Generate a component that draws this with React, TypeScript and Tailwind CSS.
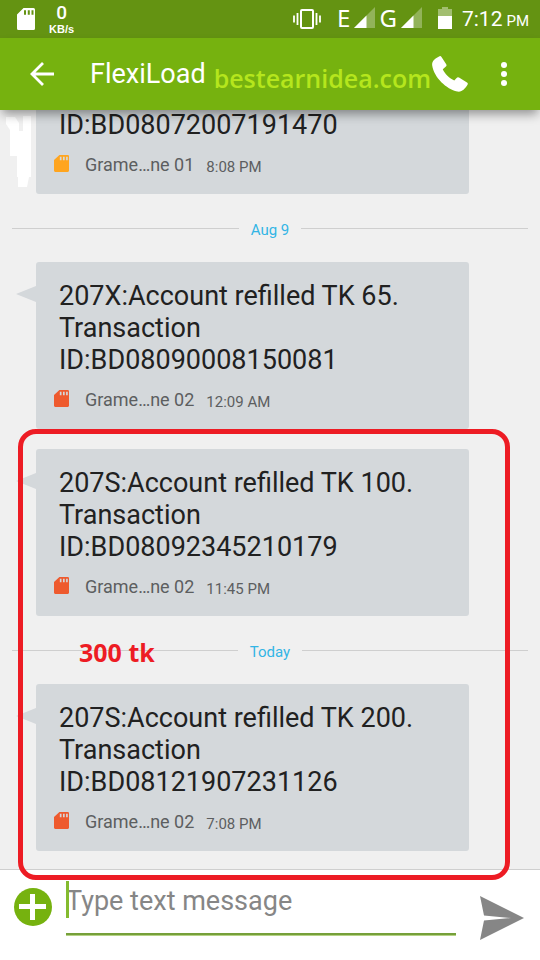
import { useState } from 'react'

interface Message {
  id: string
  lines: string[]
  sim: 'one' | 'two'
  carrier: string
  time: string
}

const earlier: Message = {
  id: 'm1',
  lines: ['ID:BD08072007191470'],
  sim: 'one',
  carrier: 'Grame…ne 01',
  time: '8:08 PM',
}

const midnight: Message = {
  id: 'm2',
  lines: ['207X:Account refilled TK 65.', 'Transaction', 'ID:BD08090008150081'],
  sim: 'two',
  carrier: 'Grame…ne 02',
  time: '12:09 AM',
}

const first: Message = {
  id: 'm3',
  lines: ['207S:Account refilled TK 100.', 'Transaction', 'ID:BD08092345210179'],
  sim: 'two',
  carrier: 'Grame…ne 02',
  time: '11:45 PM',
}

const second: Message = {
  id: 'm4',
  lines: ['207S:Account refilled TK 200.', 'Transaction', 'ID:BD08121907231126'],
  sim: 'two',
  carrier: 'Grame…ne 02',
  time: '7:08 PM',
}

function SdCard({ className }: { className: string }) {
  return (
    <svg className={className} viewBox="0 0 18 22" fill="currentColor" preserveAspectRatio="none">
      <path
        fillRule="evenodd"
        d="M6.5 0H16.5Q18 0 18 1.500V20.500Q18 22 16.500 22H1.500Q0 22 0 20.500V6.500ZM7 2.200V6.800H9V2.200ZM10.800 2.200V6.800H12.800V2.200ZM14.500 2.200V6.800H16.500V2.200Z"
      />
    </svg>
  )
}

function Signal() {
  return (
    <svg className="mb-[3px] ml-1 h-[21px] w-[21px]" viewBox="0 0 21 21" fill="white">
      <path d="M21 0V21H0Z" opacity="0.3" />
      <path d="M12.500 8.500V21H0Z" />
    </svg>
  )
}

function StatusBar() {
  return (
    <div className="flex h-[38px] shrink-0 items-center bg-[#649312] pl-[17px] pr-[11px] text-white">
      <SdCard className="h-[22px] w-[18px]" />
      <div className="ml-[14px] flex flex-col items-center">
        <span className="text-[19px] font-medium leading-5">0</span>
        <span className="font-['Liberation_Sans'] text-[11px] font-bold leading-3">KB/s</span>
      </div>

      <div className="ml-auto flex items-center">
        <svg className="h-[22px] w-7" viewBox="0 0 28 22" fill="none" stroke="white" strokeWidth="2">
          <rect x="8" y="2" width="12" height="18" rx="1" />
          <path d="M4.500 5V17M1 7.500V14.500M23.500 5V17M27 7.500V14.500" strokeWidth="1.800" />
        </svg>
        <span className="ml-4 mb-[2px] font-['Noto_Sans'] text-2xl leading-6">E</span>
        <Signal />
        <span className="ml-1 mb-[2px] font-['Noto_Sans'] text-2xl leading-6">G</span>
        <Signal />
        <svg className="mb-[2px] ml-4 h-[22px] w-[14px]" viewBox="0 0 14 22" fill="white">
          <path d="M4 0H10V2H14V9H0V2H4Z" opacity="0.4" />
          <path d="M0 9H14V22H0Z" />
        </svg>
        <span className="ml-[10px] text-[21px] leading-6">7:12</span>
        <span className="ml-1 pt-1 text-[15px] leading-5">PM</span>
      </div>
    </div>
  )
}

function AppBar() {
  return (
    <header className="flex h-[72px] shrink-0 items-center bg-[#76b20f] pl-[30px] pr-[29px] text-white shadow-[0_6px_10px_-2px_rgba(0,0,0,0.4)]">
      <button type="button" aria-label="Back">
        <svg className="h-6 w-6" viewBox="0 0 24 24" fill="none" stroke="white" strokeWidth="2.800">
          <path d="M24 12H2.500M13 1L2 12L13 23" />
        </svg>
      </button>
      <h1 className="ml-9 text-[27px] leading-8">FlexiLoad</h1>
      <span className="ml-2 pt-2 font-['Open_Sans'] text-[25px] font-semibold leading-8 text-[#b5e61d]">
        bestearnidea.com
      </span>
      <button type="button" aria-label="Call" className="ml-auto shrink-0">
        <svg className="h-9 w-9" viewBox="0 0 36 36" fill="white">
          <path d="M7.500 0.300Q8.600-0.300 9.500 1L14.200 8.200Q15 9.500 13.900 10.500L10.800 13.200C12.600 17.700 17.500 22.300 22.300 24.500L24.600 22Q25.700 20.800 27 21.600L35 26.600Q36.300 27.400 35.500 28.700C33.300 32.300 30 36.500 25.200 35.500C14.500 33.200 2 21.500 0.200 9.500C-0.500 5 3.800 2.200 7.500 0.300Z" />
        </svg>
      </button>
      <button type="button" aria-label="More options" className="ml-[29px] shrink-0">
        <svg className="h-6 w-[14px]" viewBox="0 0 14 24" fill="white">
          <circle cx="7" cy="3" r="3" />
          <circle cx="7" cy="12" r="3" />
          <circle cx="7" cy="21" r="3" />
        </svg>
      </button>
    </header>
  )
}

function Bubble({ message, tail = true }: { message: Message; tail?: boolean }) {
  return (
    <article className="relative ml-9 mr-[71px] shrink-0 rounded-[3px] bg-[#d4d8db] pb-[17px] pl-[23px] pt-[18px]">
      {tail && (
        <svg className="absolute -left-5 top-6 h-4 w-5" viewBox="0 0 20 16" fill="#d4d8db">
          <path d="M20 0V16L0 8Z" />
        </svg>
      )}
      {message.lines.map((line) => (
        <p key={line} className="text-[27px] leading-8 text-[#212121]">
          {line}
        </p>
      ))}
      <div className="-ml-[5px] mt-3 flex h-6 items-center text-[#5c5e60]">
        <SdCard className={message.sim === 'one' ? 'mb-1 h-[17px] w-[15px] text-[#ffa51f]' : 'mb-1 h-[17px] w-[15px] text-[#ee5a2e]'} />
        <span className="ml-4 text-lg leading-6">{message.carrier}</span>
        <time className="ml-3 pt-1 text-[15px] leading-5">{message.time}</time>
      </div>
    </article>
  )
}

function DateDivider({ label, note }: { label: string; note?: string }) {
  return (
    <div className="relative flex h-[68px] shrink-0 items-center gap-3 px-3">
      <span className="h-px flex-1 bg-[#cfcfcf]" />
      <span className="pt-1 text-[15px] leading-5 text-[#33b5e5]">{label}</span>
      <span className="h-px flex-1 bg-[#cfcfcf]" />
      {note && (
        <strong className="absolute left-[79px] top-5 font-['Open_Sans'] text-[25px] font-bold leading-8 text-[#ed1c24]">
          {note}
        </strong>
      )}
    </div>
  )
}

function Composer() {
  const [text, setText] = useState('')

  return (
    <form
      className="flex shrink-0 items-start border-t border-[#cfcfcf] bg-white pb-5 pl-[14px] pr-4 pt-[11px]"
      onSubmit={(e) => e.preventDefault()}
    >
      <button type="button" aria-label="Add attachment" className="mt-[7px]">
        <svg className="h-[38px] w-[38px]" viewBox="0 0 38 38">
          <circle cx="19" cy="19" r="19" fill="#76b20f" />
          <path d="M18.500 6V32M5 18.500H32" stroke="white" strokeWidth="5" />
        </svg>
      </button>
      <div className="relative ml-[14px] flex-1 border-b border-[#b5d286]">
        {/* Caret */}
        {!text && <span className="absolute left-0 top-0 h-[37px] w-[3px] bg-[#84bb2f]" />}
        <input
          type="text"
          aria-label="Type text message"
          placeholder="Type text message"
          value={text}
          onChange={(e) => setText(e.target.value)}
          className="block w-full border-b-2 border-[#76a03a] bg-transparent pb-3 text-[27px] leading-10 text-[#212121] outline-none placeholder:text-[#868686]"
        />
      </div>
      <button type="submit" aria-label="Send" className="ml-6 mt-[15px]">
        <svg className="h-11 w-11" viewBox="0 0 44 44" fill="#868686">
          <path d="M0 0L44 22L0 44L4 24.500L31 22L4 19.500Z" />
        </svg>
      </button>
    </form>
  )
}

export default function App() {
  return (
    <div className="flex h-screen flex-col overflow-hidden bg-[#f0f0f0] font-[Roboto,sans-serif]">
      <div className="relative z-20 shrink-0">
        <StatusBar />
        <AppBar />
      </div>

      <main className="relative flex min-h-0 flex-1 flex-col justify-end pb-[18px]">
        <Bubble message={earlier} tail={false} />
        <svg className="absolute left-[6px] top-[6px] h-[72px] w-[26px]" viewBox="0 0 26 72" fill="white">
          <path d="M0 1H9L13 7V15H17V0H25V61H23L21 71H12V61H11V40H4V14L0 8Z" />
        </svg>
        <DateDivider label="Aug 9" />
        <Bubble message={midnight} />

        {/* Outlined pair of refills */}
        <section className="relative mt-5 shrink-0">
          <Bubble message={first} />
          <DateDivider label="Today" note="300 tk" />
          <Bubble message={second} />
          <div className="pointer-events-none absolute -bottom-[29px] -top-5 left-[18px] right-[30px] z-10 rounded-[18px] border-[5px] border-[#ed1c24]" />
        </section>
      </main>

      <Composer />
    </div>
  )
}
